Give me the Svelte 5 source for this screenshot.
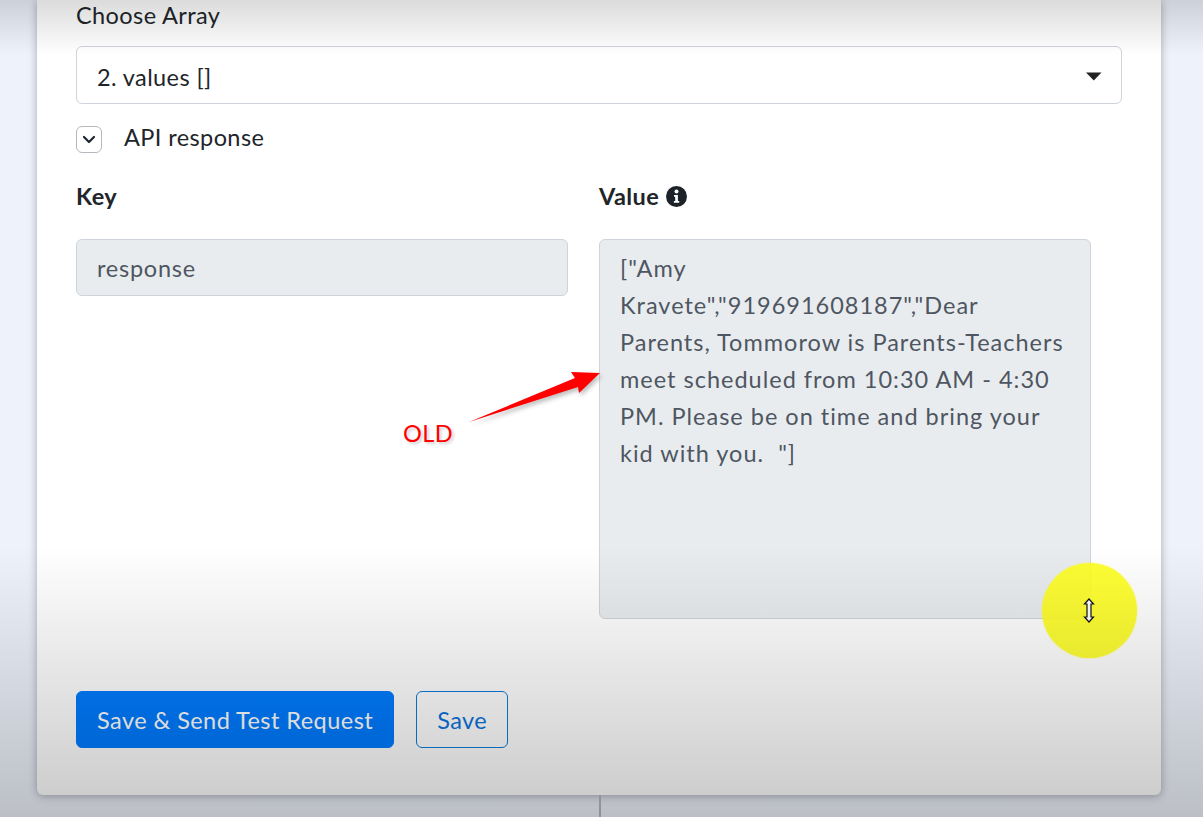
<script>
    let arrayChoice = "2. values []";
    let responseKey = "response";
    let responseValue = '["Amy\nKravete","919691608187","Dear\nParents, Tommorow is Parents-Teachers\nmeet scheduled from 10:30 AM - 4:30\nPM. Please be on time and bring your\nkid with you.  "]';
</script>

<div class="page">
    <div class="card">
        <div class="label">Choose Array</div>
        <div class="select">
            <span>{arrayChoice}</span>
            <svg class="caret" width="16" height="9" viewBox="0 0 16 9"><path d="M0 0.5h15.5L7.8 8.5z" fill="#222"/></svg>
        </div>
        <div class="toggle-row">
            <button class="toggle" aria-label="Collapse">
                <svg width="14" height="10" viewBox="0 0 14 10"><path d="M2 2l5 5 5-5" fill="none" stroke="#1c2630" stroke-width="2.2" stroke-linecap="round" stroke-linejoin="round"/></svg>
            </button>
            <span>API response</span>
        </div>
        <div class="fields">
            <div>
                <div class="head">Key</div>
                <input class="input" disabled value={responseKey} />
            </div>
            <div>
                <div class="head">Value
                    <svg class="info" width="21" height="21" viewBox="0 0 21 21">
                        <circle cx="10.5" cy="10.5" r="10.5" fill="#1c2228"/>
                        <circle cx="10.5" cy="5.6" r="2" fill="#fff"/>
                        <path d="M8 9h3.9v6h1.3v1.8H7.9V15h1.3v-4.2H8z" fill="#fff"/>
                    </svg>
                </div>
                <textarea class="input area" disabled value={responseValue}></textarea>
            </div>
        </div>
        <div class="actions">
            <button class="btn primary">Save &amp; Send Test Request</button>
            <button class="btn outline">Save</button>
        </div>
    </div>
    <div class="connector"></div>

    <!-- video annotations on top of the form -->
    <svg class="arrow" width="140" height="60" viewBox="0 0 140 60">
        <path d="M1 53L107 9 103 3 132 4 111 24 110 18z" fill="#ff0000"/>
    </svg>
    <div class="old">OLD</div>
    <div class="spot"></div>
    <svg class="cursor" width="12" height="25" viewBox="0 0 12 25">
        <path d="M6 1L10.500 6H8v13h2.500L6 24 1.500 19H4V6H1.500z" fill="#fff" stroke="#111" stroke-width="1.200"/>
    </svg>
    <div class="shade"></div>
</div>

<style>
    :global(body){
        margin: 0;
    }

    .page{
        position: relative;
        height: 817px;
        overflow: hidden;
        font-family: Lato, "Open Sans", sans-serif;
        letter-spacing: 0.4px;
        color: #212529;
        background: #eef2fb;
    }

    /* the video's dark fade over top and bottom of everything */
    .shade{
        position: absolute;
        inset: 0;
        pointer-events: none;
        background: linear-gradient(to bottom, rgba(0, 0, 0, 0.14) 0, rgba(0, 0, 0, 0) 55px, rgba(0, 0, 0, 0) 545px, rgba(0, 0, 0, 0.21) 817px);
    }

    .card{
        box-sizing: border-box;
        width: 1124px;
        height: 795px;
        margin-left: 37px;
        padding: 0 39px;
        background: #fff;
        border-radius: 0 0 6px 6px;
        box-shadow: 0 1px 8px rgba(60, 60, 70, 0.4);
    }

    .label{
        height: 46px;
        font-size: 23.5px;
        line-height: 30px;
    }

    .select{
        box-sizing: border-box;
        height: 58px;
        display: flex;
        align-items: center;
        justify-content: space-between;
        padding: 3px 20px 0;
        font-size: 23.5px;
        background: #fff;
        border: 1px solid #ced4da;
        border-radius: 6px;
    }

    .caret{
        margin-right: -1px;
    }

    .toggle-row{
        display: flex;
        align-items: center;
        gap: 22px;
        margin-top: 22px;
        height: 27px;
        font-size: 23.5px;
    }

    .toggle-row span{
        margin-bottom: 5px;
    }

    .toggle{
        box-sizing: border-box;
        width: 26px;
        height: 27px;
        padding: 0;
        display: flex;
        align-items: center;
        justify-content: center;
        background: #fff;
        border: 1px solid #b5b8bc;
        border-radius: 6px;
    }

    .fields{
        display: grid;
        grid-template-columns: 492px 492px;
        gap: 31px;
        margin-top: 28px;
    }

    .head{
        display: flex;
        align-items: center;
        gap: 7px;
        height: 30px;
        margin-bottom: 28px;
        font-size: 23.5px;
        font-weight: 700;
    }

    .input{
        display: block;
        box-sizing: border-box;
        width: 492px;
        height: 57px;
        padding: 0 20px;
        margin: 0;
        font: inherit;
        font-size: 23.5px;
        letter-spacing: 0.75px;
        color: #4e5661;
        opacity: 1;
        background: #e9ecef;
        border: 1px solid #ced4da;
        border-radius: 6px;
    }

    .area{
        height: 380px;
        padding: 10px 20px;
        line-height: 37px;
        letter-spacing: 1px;
    }

    .actions{
        display: flex;
        gap: 22px;
        margin-top: 72px;
    }

    .btn{
        box-sizing: border-box;
        height: 57px;
        padding: 0 20px;
        font-family: inherit;
        font-size: 23.5px;
        letter-spacing: 0.45px;
        border-radius: 6px;
    }

    .primary{
        color: #fff;
        background: #007bff;
        border: 1px solid #007bff;
    }

    .outline{
        color: #0a73dc;
        background: transparent;
        border: 1px solid #0a7bdc;
    }

    .connector{
        width: 2px;
        height: 22px;
        margin-left: 599px;
        background: #b4b7bd;
    }

    .arrow{
        position: absolute;
        left: 468px;
        top: 369px;
        filter: drop-shadow(2px 3px 2px rgba(0, 0, 0, 0.25));
    }

    .old{
        position: absolute;
        left: 403px;
        top: 419px;
        font-size: 23.5px;
        line-height: 28px;
        color: #f00;
        text-shadow: 2px 2px 3px rgba(0, 0, 0, 0.2);
    }

    .spot{
        position: absolute;
        left: 1042px;
        top: 563px;
        width: 95px;
        height: 95px;
        border-radius: 50%;
        background: rgba(255, 255, 30, 0.9);
        box-shadow: 0 0 2px rgba(255, 255, 30, 0.7);
    }

    .cursor{
        position: absolute;
        left: 1083px;
        top: 598px;
    }
</style>
